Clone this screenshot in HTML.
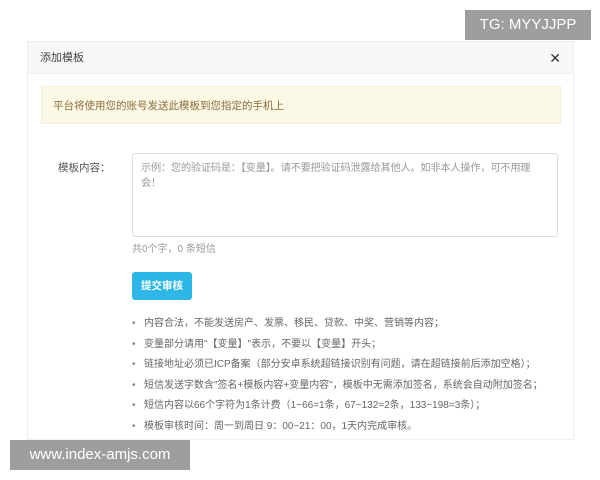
<!DOCTYPE html>
<html><head><meta charset="utf-8"><style>
*{margin:0;padding:0;box-sizing:border-box}
body{width:600px;height:480px;background:#fff;position:relative;overflow:hidden;font-family:"Liberation Sans","Noto Sans CJK SC",sans-serif;color:#555}
.dlg{position:absolute;left:27px;top:41px;width:547px;height:399px;border:1px solid #eee;background:#fff}
.hd{height:32px;background:#f8f8f8;border-bottom:1px solid #f0f0f0;font-size:11px;line-height:32px;padding-left:12px;color:#444}
.x{position:absolute;right:12px;top:0;font-size:14px;line-height:32px;color:#333}
.alert{position:absolute;left:13px;top:44px;width:520px;height:38px;background:#fcf8e6;border:1px solid #f7f0d6;font-size:10.5px;line-height:38px;padding-left:11px;color:#8a6d3b}
.lbl{position:absolute;left:30px;top:118px;font-size:10.5px;color:#555}
.ta{position:absolute;left:104px;top:111px;width:426px;height:84px;border:1px solid #ddd;border-radius:3px;padding:7px 8px;font-size:10.2px;line-height:15px;color:#999;letter-spacing:-0.2px}
.cnt{position:absolute;left:104px;top:198px;font-size:10px;color:#999}
.btn{position:absolute;left:104px;top:230px;width:60px;height:28px;background:#2db7e6;border-radius:3px;color:#fff;font-size:10.5px;line-height:28px;text-align:center;font-weight:bold}
ul{position:absolute;left:104px;top:272px;list-style:none;font-size:10px;color:#666}
li{height:20.5px;line-height:20.5px;white-space:nowrap}
li:before{content:"•";display:inline-block;width:12px;color:#888}
.tg{position:absolute;left:465px;top:10px;width:126px;height:30px;background:#9e9e9e;color:#fff;font-size:15px;line-height:30px;text-align:center}
.wm{position:absolute;left:10px;top:440px;width:180px;height:30px;background:#9e9e9e;color:#fff;font-size:15px;line-height:30px;text-align:center}
</style></head><body>
<div class="tg">TG: MYYJJPP</div>
<div class="dlg">
<div class="hd">添加模板</div><div class="x">✕</div>
<div class="alert">平台将使用您的账号发送此模板到您指定的手机上</div>
<div class="lbl">模板内容：</div>
<div class="ta">示例：您的验证码是：【变量】。请不要把验证码泄露给其他人。如非本人操作，可不用理会！</div>
<div class="cnt">共0个字，0 条短信</div>
<div class="btn">提交审核</div>
<ul>
<li>内容合法，不能发送房产、发票、移民、贷款、中奖、营销等内容；</li>
<li>变量部分请用"【变量】"表示，不要以【变量】开头；</li>
<li>链接地址必须已ICP备案（部分安卓系统超链接识别有问题，请在超链接前后添加空格）；</li>
<li>短信发送字数含"签名+模板内容+变量内容"，模板中无需添加签名，系统会自动附加签名；</li>
<li>短信内容以66个字符为1条计费（1~66=1条，67~132=2条，133~198=3条）；</li>
<li>模板审核时间：周一到周日 9：00~21：00，1天内完成审核。</li>
</ul>
</div>
<div class="wm">www.index-amjs.com</div>
</body></html>
